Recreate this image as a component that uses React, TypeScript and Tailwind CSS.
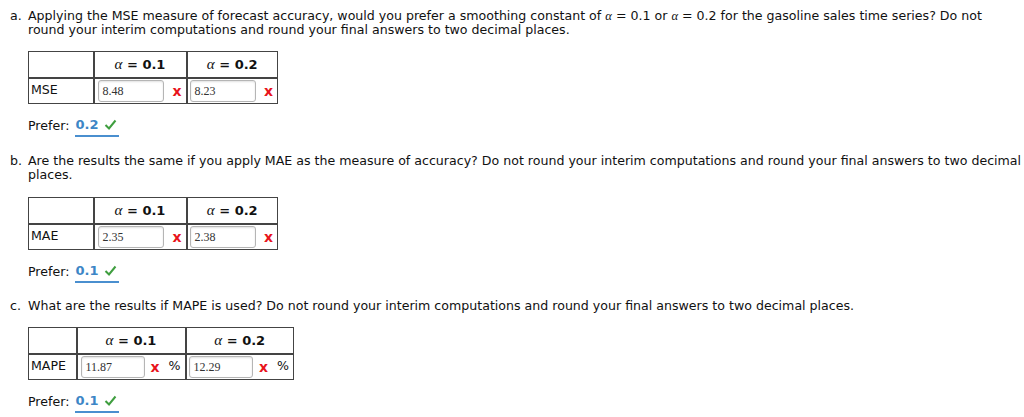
import React from "react";

const font = { fontFamily: '"DejaVu Sans", Verdana, sans-serif' };

function Alpha({ v }: { v: string }) {
  return (
    <span className="whitespace-nowrap">
      <span className="italic font-normal text-[15px]" style={{ fontFamily: '"Liberation Serif", serif' }}>α</span>
      <span className="font-bold"> = {v}</span>
    </span>
  );
}

function XMark() {
  return <span className="text-[#e8141c] font-bold text-[14px] leading-none">x</span>;
}

function Input({ value, w }: { value: string; w: string }) {
  return (
    <div
      className={`${w} h-[22px] border border-[#b5b5b5] rounded-[3px] bg-white shadow-[inset_0_1px_2px_rgba(0,0,0,0.12)] flex items-center pl-[4px] text-[12px] text-[#333]`}
      style={{ fontFamily: '"Liberation Serif", serif' }}
    >
      {value}
    </div>
  );
}

function Table({
  label,
  c1,
  c2,
  c3,
  v1,
  v2,
  inputW,
  pct,
}: {
  label: string;
  c1: string;
  c2: string;
  c3: string;
  v1: string;
  v2: string;
  inputW: string;
  pct?: boolean;
}) {
  return (
    <table className="border-collapse text-[12.6px] text-[#111]">
      <tbody>
        <tr className="h-[26px]">
          <td className={`${c1} border border-[#444]`}></td>
          <td className={`${c2} border border-[#444] border-l-2 text-center text-[13px]`}>
            <Alpha v="0.1" />
          </td>
          <td className={`${c3} border border-[#444] border-l-2 text-center text-[13px]`}>
            <Alpha v="0.2" />
          </td>
        </tr>
        <tr className="h-[26px]">
          <td className="border border-[#444] border-t-2 pl-[2px] align-middle">{label}</td>
          <td className="border border-[#444] border-l-2 border-t-2 pl-[3px] pr-[4px]">
            <div className="flex items-center">
              <Input value={v1} w={inputW} />
              <div className="flex-1 flex justify-end gap-[9px] items-center">
                <XMark />
                {pct && <span>%</span>}
              </div>
            </div>
          </td>
          <td className="border border-[#444] border-l-2 border-t-2 pl-[2px] pr-[4px]">
            <div className="flex items-center">
              <Input value={v2} w={inputW} />
              <div className="flex-1 flex justify-end gap-[9px] items-center">
                <XMark />
                {pct && <span>%</span>}
              </div>
            </div>
          </td>
        </tr>
      </tbody>
    </table>
  );
}

function Prefer({ v }: { v: string }) {
  return (
    <div className="flex items-center text-[12.6px] text-[#111] h-[16px]">
      <span>Prefer:</span>
      <span className="ml-[6px] border-b-2 border-[#4a8fcf] flex items-center gap-[6px] pr-[2px] pb-[1px]">
        <span className="text-[#3d86c6] font-bold text-[13px]">{v}</span>
        <svg width="13" height="11" viewBox="0 0 13 11">
          <path d="M1.5 6 L5 9.5 L11.5 1.5" fill="none" stroke="#3f9e3f" strokeWidth="2" />
        </svg>
      </span>
    </div>
  );
}

export default function App() {
  return (
    <div className="w-[1024px] h-[417px] bg-white overflow-hidden text-[12.6px] text-[#111]" style={font}>
      <div className="pt-[9px] pl-[10px]">
        <div className="flex leading-[14px]">
          <span className="w-[18px]">a.</span>
          <div className="whitespace-nowrap">
            Applying the MSE measure of forecast accuracy, would you prefer a smoothing constant of{" "}
            <span className="italic" style={{ fontFamily: '"Liberation Serif", serif' }}>α</span> = 0.1 or{" "}
            <span className="italic" style={{ fontFamily: '"Liberation Serif", serif' }}>α</span> = 0.2 for the gasoline sales time series? Do not
            <br />
            round your interim computations and round your final answers to two decimal places.
          </div>
        </div>
        <div className="pl-[18px] mt-[14px]">
          <Table label="MSE" c1="w-[65px]" c2="w-[93px]" c3="w-[91px]" v1="8.48" v2="8.23" inputW="w-[66px]" />
          <div className="mt-[14px]">
            <Prefer v="0.2" />
          </div>
        </div>

        <div className="flex leading-[14px] mt-[20px]">
          <span className="w-[18px]">b.</span>
          <div className="whitespace-nowrap">
            Are the results the same if you apply MAE as the measure of accuracy? Do not round your interim computations and round your final answers to two decimal
            <br />
            places.
          </div>
        </div>
        <div className="pl-[18px] mt-[15px]">
          <Table label="MAE" c1="w-[65px]" c2="w-[93px]" c3="w-[91px]" v1="2.35" v2="2.38" inputW="w-[66px]" />
          <div className="mt-[14px]">
            <Prefer v="0.1" />
          </div>
        </div>

        <div className="flex leading-[14px] mt-[19px]">
          <span className="w-[18px]">c.</span>
          <div className="whitespace-nowrap">
            What are the results if MAPE is used? Do not round your interim computations and round your final answers to two decimal places.
          </div>
        </div>
        <div className="pl-[18px] mt-[14px]">
          <Table label="MAPE" c1="w-[48px]" c2="w-[109px]" c3="w-[108px]" v1="11.87" v2="12.29" inputW="w-[64px]" pct />
          <div className="mt-[14px]">
            <Prefer v="0.1" />
          </div>
        </div>
      </div>
    </div>
  );
}
